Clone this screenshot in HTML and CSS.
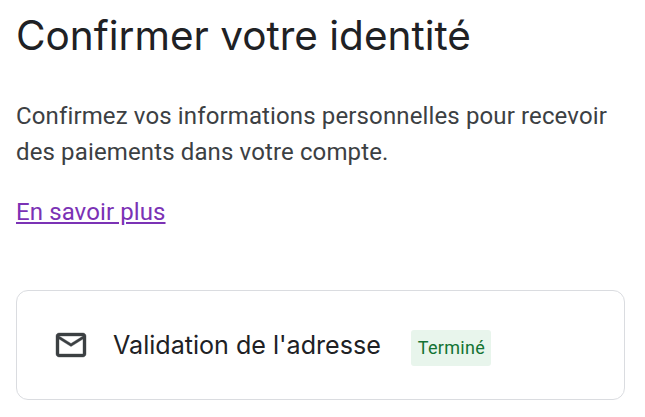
FILE: index.html
```html
<!DOCTYPE html>
<html lang="fr">
<head>
    <meta charset="UTF-8">
    <title>Confirmer votre identité</title>
    <link rel="stylesheet" href="styles.css">
</head>
<body>
    <div class="container">
        <h1 class="title">Confirmer votre identité</h1>
        <p class="intro">Confirmez vos informations personnelles pour recevoir des paiements dans votre compte.</p>
        <a class="more" href="#">En savoir plus</a>
        <div class="card">
            <svg class="icon" width="36" height="36" viewBox="0 0 24 24" fill="#3c4043" stroke="#3c4043" stroke-width=".25">
                <path d="M20 4H4c-1.100 0-2 .9-2 2v12c0 1.100.9 2 2 2h16c1.100 0 2-.9 2-2V6c0-1.100-.9-2-2-2zm0 14H4V8l8 5 8-5v10zm-8-7L4 6h16l-8 5z"/>
            </svg>
            <span class="label">Validation de l'adresse</span>
            <span class="status">Terminé</span>
        </div>
    </div>
</body>
</html>
```

FILE: styles.css
```css
* {
    margin: 0;
    padding: 0;
    box-sizing: border-box;
}

body {
    font-family: "Roboto", "Liberation Sans", sans-serif;
    background: #fff;
    overflow: hidden;
}

.container {
    padding: 8px 20px 0 16px;
}

.title {
    font-family: "Inter", "Roboto", sans-serif;
    font-size: 40.5px;
    font-weight: 400;
    line-height: 56px;
    color: #202124;
}

.intro {
    margin-top: 34px;
    font-size: 24px;
    line-height: 36px;
    letter-spacing: .13px;
    color: #3c4043;
}

.more {
    display: inline-block;
    margin-top: 24px;
    font-size: 24px;
    line-height: 36px;
    letter-spacing: .1px;
    color: #7b32b5;
}

.card {
    display: flex;
    align-items: center;
    width: 609px;
    height: 110px;
    margin-top: 60px;
    padding-left: 36px;
    border: 1px solid #dadce0;
    border-radius: 12px;
}

.icon {
    flex: none;
}

.label {
    margin-left: 24px;
    font-family: "Inter", "Roboto", sans-serif;
    font-size: 25.1px;
    color: #202124;
}

.status {
    margin-top: 6px;
    margin-left: 30px;
    padding: 0 6px 0 7px;
    font-size: 18px;
    letter-spacing: .3px;
    line-height: 36px;
    color: #137333;
    background: #e8f5ec;
    border-radius: 3px;
}
```
